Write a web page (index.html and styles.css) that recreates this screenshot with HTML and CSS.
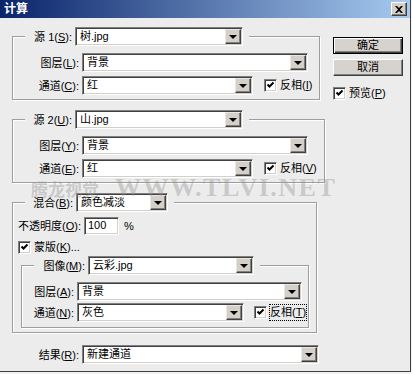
FILE: index.html
```html
<!DOCTYPE html>
<html lang="zh-CN">
<head>
    <meta charset="UTF-8">
    <meta name="viewport" content="width=device-width, initial-scale=1.0">
    <title>计算</title>
    <link rel="stylesheet" href="styles.css">
</head>
<body>
<div class="window">
    <div class="titlebar">
        <span class="title">计算</span>
        <span class="close">
            <svg width="8" height="7" viewBox="0 0 8 7"><path d="M0 0h2l2 2 2-2h2L5 3.5 8 7H6L4 5 2 7H0l3-3.5z" fill="#000"/></svg>
        </span>
    </div>

    <div class="content">
        <div class="main">
            <fieldset class="group">
                <legend>
                    <label class="lbl lbl-src">源 1(<u>S</u>):</label>
                    <div class="combo w-src"><span>树.jpg</span><i class="arrow"></i></div>
                </legend>
                <div class="row">
                    <label class="lbl lbl-row">图层(<u>L</u>):</label>
                    <div class="combo w-long"><span>背景</span><i class="arrow"></i></div>
                </div>
                <div class="row">
                    <label class="lbl lbl-row">通道(<u>C</u>):</label>
                    <div class="combo w-short"><span>红</span><i class="arrow"></i></div>
                    <span class="check"><svg width="9" height="9" viewBox="0 0 9 9"><path d="M1.5 3.5l2 2 4-4" stroke="#000" stroke-width="2" fill="none"/></svg></span>
                    <span class="check-text">反相(<u>I</u>)</span>
                </div>
            </fieldset>

            <fieldset class="group">
                <legend>
                    <label class="lbl lbl-src">源 2(<u>U</u>):</label>
                    <div class="combo w-src"><span>山.jpg</span><i class="arrow"></i></div>
                </legend>
                <div class="row">
                    <label class="lbl lbl-row">图层(<u>Y</u>):</label>
                    <div class="combo w-long"><span>背景</span><i class="arrow"></i></div>
                </div>
                <div class="row">
                    <label class="lbl lbl-row">通道(<u>E</u>):</label>
                    <div class="combo w-short"><span>红</span><i class="arrow"></i></div>
                    <span class="check"><svg width="9" height="9" viewBox="0 0 9 9"><path d="M1.5 3.5l2 2 4-4" stroke="#000" stroke-width="2" fill="none"/></svg></span>
                    <span class="check-text">反相(<u>V</u>)</span>
                </div>
            </fieldset>

            <fieldset class="group group-blend">
                <legend>
                    <label class="lbl lbl-blend">混合(<u>B</u>):</label>
                    <div class="combo w-blend"><span>颜色减淡</span><i class="arrow"></i></div>
                </legend>
                <div class="row row-opacity">
                    <label class="lbl lbl-opacity">不透明度(<u>O</u>):</label>
                    <div class="field">100</div>
                    <span class="unit">%</span>
                </div>
                <div class="row row-mask">
                    <span class="check"><svg width="9" height="9" viewBox="0 0 9 9"><path d="M1.5 3.5l2 2 4-4" stroke="#000" stroke-width="2" fill="none"/></svg></span>
                    <span class="check-text">蒙版(<u>K</u>)...</span>
                </div>

                <fieldset class="group group-mask">
                    <legend>
                        <label class="lbl lbl-image">图像(<u>M</u>):</label>
                        <div class="combo w-image"><span>云彩.jpg</span><i class="arrow"></i></div>
                    </legend>
                    <div class="row">
                        <label class="lbl lbl-inner">图层(<u>A</u>):</label>
                        <div class="combo w-inner-long"><span>背景</span><i class="arrow"></i></div>
                    </div>
                    <div class="row">
                        <label class="lbl lbl-inner">通道(<u>N</u>):</label>
                        <div class="combo w-inner-short"><span>灰色</span><i class="arrow"></i></div>
                        <span class="check check-inner"><svg width="9" height="9" viewBox="0 0 9 9"><path d="M1.5 3.5l2 2 4-4" stroke="#000" stroke-width="2" fill="none"/></svg></span>
                        <span class="check-text focused">反相(<u>T</u>)</span>
                    </div>
                </fieldset>
            </fieldset>

            <div class="row row-result">
                <label class="lbl lbl-result">结果(<u>R</u>):</label>
                <div class="combo w-result"><span>新建通道</span><i class="arrow"></i></div>
            </div>
        </div>

        <div class="side">
            <button class="btn btn-default">确定</button>
            <button class="btn">取消</button>
            <div class="preview">
                <span class="check"><svg width="9" height="9" viewBox="0 0 9 9"><path d="M1.5 3.5l2 2 4-4" stroke="#000" stroke-width="2" fill="none"/></svg></span>
                <span class="check-text">预览(<u>P</u>)</span>
            </div>
        </div>
    </div>

    <div class="watermark"><span class="wm-cn">腾龙视觉</span>WWW.TLVI.NET</div>
</div>
</body>
</html>
```

FILE: styles.css
```css
* {
    box-sizing: border-box;
}
html, body {
    margin: 0;
    background: #f2f2f2;
}
body {
    font-family: "Liberation Sans", "Noto Sans CJK SC", sans-serif;
    font-size: 11px;
    color: #000;
}
u {
    text-decoration: underline;
    text-underline-offset: 1px;
}

/* window frame */
.window {
    position: relative;
    width: 411px;
    height: 372px;
    background: #ececec;
    border-right: 1px solid #404040;
    border-bottom: 1px solid #404040;
}
.titlebar {
    height: 18px;
    display: flex;
    align-items: center;
    justify-content: space-between;
    padding: 0 3px 0 4px;
    background: linear-gradient(to right, #0a246a, #a6caf0);
}
.title {
    color: #fff;
    font-weight: bold;
    font-size: 12px;
    line-height: 14px;
}
.close {
    width: 16px;
    height: 14px;
    display: flex;
    align-items: center;
    justify-content: center;
    background: #d4d0c8;
    border: 1px solid;
    border-color: #fff #404040 #404040 #fff;
    box-shadow: inset -1px -1px 0 #808080;
}

/* layout */
.content {
    display: flex;
    padding: 9px 0 0 12px;
}
.main {
    width: 305px;
}
.side {
    margin-left: 16px;
    padding-top: 10px;
    width: 70px;
}

/* group boxes */
.group {
    margin: 0 0 10px;
    padding: 7px 7px 4px 8px;
    border: 1px solid #9d9d9d;
    box-shadow: 1px 1px 0 #fff, inset 1px 1px 0 #fff;
}
.group legend {
    display: flex;
    align-items: center;
    margin-left: 4px;
    padding: 0 6px 0 0;
    background: #ececec;
}
.group-blend {
    padding-top: 5px;
}
.group-mask {
    margin: 1px 0 0;
    padding: 7px 0 5px 8px;
}

.row {
    display: flex;
    align-items: center;
    height: 19px;
}
.row + .row {
    margin-top: 4px;
}
.group-mask .row + .row {
    margin-top: 2px;
}

.lbl {
    flex: none;
    text-align: right;
    white-space: nowrap;
    margin-right: 3px;
    line-height: 16px;
}
.lbl-src { width: 47px; }
.lbl-row { width: 58px; }
.lbl-blend { width: 48px; }
.lbl-opacity {
    width: 66px;
    margin-left: -6px;
}
.lbl-image { width: 51px; }
.lbl-inner { width: 44px; }
.lbl-result { width: 67px; }

/* combo boxes */
.combo {
    flex: none;
    display: flex;
    align-items: center;
    height: 19px;
    padding-left: 4px;
    background: #fff;
    border: 1px solid;
    border-color: #808080 #fff #fff #808080;
    box-shadow: inset 1px 1px 0 #404040, inset -1px -1px 0 #d4d0c8;
    line-height: 15px;
}
.combo span {
    flex: 1;
    white-space: nowrap;
}
.arrow {
    flex: none;
    width: 16px;
    height: 15px;
    margin-right: 1px;
    display: flex;
    align-items: center;
    justify-content: center;
    background: #d4d0c8;
    border: 1px solid;
    border-color: #e8e8e8 #404040 #404040 #e8e8e8;
    box-shadow: inset -1px -1px 0 #808080;
}
.arrow::after {
    content: "";
    border-top: 4px solid #000;
    border-left: 4px solid transparent;
    border-right: 4px solid transparent;
}
.w-src { width: 168px; }
.w-long { width: 226px; }
.w-short { width: 171px; }
.w-blend { width: 92px; }
.w-image { width: 166px; }
.w-inner-long { width: 225px; }
.w-inner-short { width: 167px; }
.w-result { width: 237px; }

/* text field */
.field {
    width: 35px;
    height: 18px;
    padding-left: 3px;
    background: #fff;
    border: 1px solid;
    border-color: #808080 #fff #fff #808080;
    box-shadow: inset 1px 1px 0 #404040, inset -1px -1px 0 #d4d0c8;
    line-height: 15px;
}
.unit {
    margin-left: 5px;
}
.row-opacity {
    height: 18px;
}
.row-mask {
    height: 16px;
    margin-top: 3px;
    margin-left: -3px;
}

/* checkboxes */
.check {
    flex: none;
    width: 13px;
    height: 13px;
    display: flex;
    align-items: center;
    justify-content: center;
    margin-left: 11px;
    background: #fff;
    border: 1px solid;
    border-color: #808080 #fff #fff #808080;
    box-shadow: inset 1px 1px 0 #404040, inset -1px -1px 0 #d4d0c8;
}
.check svg {
    display: block;
}
.row-mask .check,
.preview .check {
    margin-left: 0;
}
.check-inner {
    margin-left: 10px;
}
.check-text {
    margin-left: 3px;
    white-space: nowrap;
    line-height: 15px;
}
.focused {
    outline: 1px dotted #000;
}

.row-result {
    margin-top: 12px;
}

/* buttons */
.btn {
    display: block;
    width: 70px;
    height: 17px;
    padding: 0;
    margin-bottom: 5px;
    font: inherit;
    line-height: 13px;
    color: #000;
    background: #d6d3ce;
    border: 1px solid;
    border-color: #fff #404040 #404040 #fff;
    box-shadow: inset -1px -1px 0 #808080;
}
.btn-default {
    border-color: #000;
    box-shadow: inset 1px 1px 0 #fff, inset -1px -1px 0 #404040, inset -2px -2px 0 #808080;
}
.preview {
    display: flex;
    align-items: center;
    margin-top: 10px;
}

/* watermark laid over the dialog */
.watermark {
    position: absolute;
    left: 31px;
    top: 178px;
    font-family: "Liberation Serif", "Noto Sans CJK SC", serif;
    font-weight: bold;
    font-size: 26px;
    line-height: 20px;
    letter-spacing: 1.5px;
    color: rgba(150, 150, 150, 0.42);
    white-space: nowrap;
    pointer-events: none;
}
.wm-cn {
    margin-right: 16px;
    font-family: "Noto Sans CJK SC", sans-serif;
    font-size: 17px;
    letter-spacing: 0;
}
```
